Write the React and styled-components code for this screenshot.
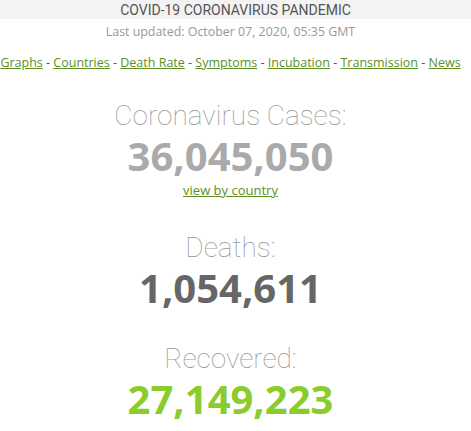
import React from "react";
import styled, { createGlobalStyle } from "styled-components";

const GlobalStyle = createGlobalStyle`
  body {
    margin: 0;
    background: #fff;
    font-family: "Open Sans", "Liberation Sans", sans-serif;
  }
`;

const TopBar = styled.div`
  background: #f3f3f3;
  height: 19px;
  display: flex;
  align-items: center;
  justify-content: center;
  font-family: Roboto, "Liberation Sans", sans-serif;
  font-size: 14px;
  color: #555;
`;

const Main = styled.main`
  width: 461px;
  text-align: center;
`;

const Updated = styled.div`
  font-size: 12.4px;
  color: #999;
  margin-top: 4px;
  line-height: 18px;
`;

const Nav = styled.nav`
  margin-top: 13px;
  font-size: 12.5px;
  color: #555;
  line-height: 18px;
  white-space: nowrap;
`;

const Link = styled.a`
  color: #5d8f1f;
  text-decoration: underline;
`;

const Block = styled.section`
  margin-top: ${(p) => p.$top}px;
  display: flex;
  flex-direction: column;
  align-items: center;
`;

const Label = styled.h1`
  margin: 0;
  font-family: Roboto, "Liberation Sans", sans-serif;
  font-weight: 100;
  font-size: 28px;
  line-height: 36px;
  color: #999;
`;

const Number = styled.div`
  font-weight: 700;
  font-size: 40px;
  line-height: 44px;
  color: ${(p) => p.$color};
`;

const SmallLink = styled.a`
  margin-top: 3px;
  font-size: 13px;
  line-height: 18px;
  color: #5d8f1f;
  text-decoration: underline;
`;

const links = ["Graphs", "Countries", "Death Rate", "Symptoms", "Incubation", "Transmission", "News"];

export default function App() {
  return (
    <>
      <GlobalStyle />
      <TopBar>COVID-19 CORONAVIRUS PANDEMIC</TopBar>
      <Main>
        <Updated>Last updated: October 07, 2020, 05:35 GMT</Updated>
        <Nav>
          {links.map((l, i) => (
            <React.Fragment key={l}>
              {i > 0 && " - "}
              <Link href="#">{l}</Link>
            </React.Fragment>
          ))}
        </Nav>
        <Block $top={26}>
          <Label>Coronavirus Cases:</Label>
          <Number $color="#aaa">36,045,050</Number>
          <SmallLink href="#">view by country</SmallLink>
        </Block>
        <Block $top={31}>
          <Label>Deaths:</Label>
          <Number $color="#666">1,054,611</Number>
        </Block>
        <Block $top={31}>
          <Label>Recovered:</Label>
          <Number $color="#8acc2c">27,149,223</Number>
        </Block>
      </Main>
    </>
  );
}
